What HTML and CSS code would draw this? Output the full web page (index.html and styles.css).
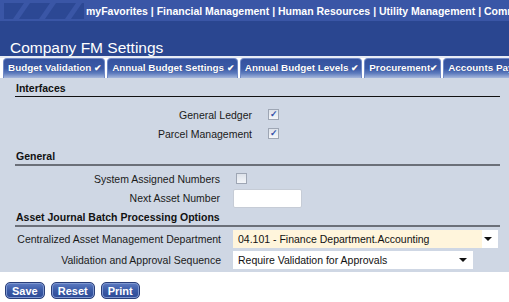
FILE: index.html
```html
<!DOCTYPE html>
<html>
	<head>
		<meta charset="UTF-8">
		<title>Company FM Settings</title>
		<link rel="stylesheet" href="styles.css">
	</head>
	<body>
		<div class="topbar">
			<svg class="logo" width="84" height="21" viewBox="0 0 84 21">
				<rect x="0" y="0" width="84" height="21" fill="#3a56a6"/>
				<polygon points="4,3 24,3 13,19 4,19" fill="#2c4894"/>
				<polygon points="30,3 50,3 39,19 19,19" fill="#2c4894"/>
				<polygon points="56,3 76,3 65,19 45,19" fill="#2c4894"/>
				<polygon points="82,3 84,3 84,19 71,19" fill="#2c4894"/>
			</svg>
			<div class="favs">myFavorites | Financial Management | Human Resources | Utility Management | Community Development</div>
		</div>
		<div class="titlebar">Company FM Settings</div>
		<div class="tabs">
			<div class="tab">Budget Validation <span class="chk">&#10004;</span></div>
			<div class="tab">Annual Budget Settings <span class="chk">&#10004;</span></div>
			<div class="tab">Annual Budget Levels <span class="chk">&#10004;</span></div>
			<div class="tab">Procurement<span class="chk">&#10004;</span></div>
			<div class="tab">Accounts Payable <span class="chk">&#10004;</span></div>
		</div>
		<div class="panel">
			<div class="section">Interfaces</div>
			<div class="rows rows-iface">
				<label>General Ledger</label>
				<span class="box checked">&#10003;</span>
				<label>Parcel Management</label>
				<span class="box checked">&#10003;</span>
			</div>
			<div class="section sec-gray sec-general">General</div>
			<div class="rows rows-gen">
				<label>System Assigned Numbers</label>
				<span class="box box-gen"></span>
				<label>Next Asset Number</label>
				<span class="txt"></span>
			</div>
			<div class="section sec-gray sec-asset">Asset Journal Batch Processing Options</div>
			<div class="rows rows-asset">
				<label>Centralized Asset Management Department</label>
				<div class="sel sel-yellow"><span>04.101 - Finance Department.Accounting</span><i class="arrow"></i></div>
				<label>Validation and Approval Sequence</label>
				<div class="sel sel-short"><span>Require Validation for Approvals</span><i class="arrow"></i></div>
			</div>
		</div>
		<div class="buttons">
			<button class="btn">Save</button>
			<button class="btn">Reset</button>
			<button class="btn">Print</button>
		</div>
	</body>
</html>
```
FILE: styles.css
```css
*{
	margin: 0;
	padding: 0;
	box-sizing: border-box;
}
body{
	width: 509px;
	height: 302px;
	overflow: hidden;
	background: #fff;
	font-family: "Liberation Sans", Arial, sans-serif;
	font-size: 10.5px;
	color: #111;
}
.topbar{
	height: 21px;
	background: #3a56a6;
	display: flex;
	align-items: center;
	white-space: nowrap;
	overflow: hidden;
}
.logo{
	flex: none;
}
.favs{
	color: #fff;
	font-weight: bold;
	font-size: 10.5px;
	padding-left: 2px;
}
.titlebar{
	height: 37px;
	background: #2a4690;
	color: #fff;
	font-size: 15.5px;
	padding: 18px 0 0 10px;
	border-bottom: 2px solid #e8ecf5;
}
.tabs{
	display: flex;
	gap: 2px;
	padding-left: 3px;
	background: #fff;
	white-space: nowrap;
	overflow: hidden;
}
.tab{
	flex: none;
	height: 20px;
	line-height: 18px;
	padding: 0 2px 0 4px;
	color: #fff;
	font-weight: bold;
	font-size: 9.9px;
	border: 1px solid #7089c6;
	border-bottom: none;
	border-radius: 4px 4px 0 0;
	background: linear-gradient(#34529f 0%, #3b5aa6 50%, #5d7bbd 75%, #a7b8dc 100%);
	text-shadow: 0 0 1px #1c3378;
}
.chk{
	font-size: 9px;
}
.panel{
	background: #cfd7e4;
	padding: 2px 9px 2px 15px;
}
.section{
	font-weight: bold;
	font-size: 10.5px;
	line-height: 12px;
	padding: 2px 0 2px 1px;
	border-bottom: 1px solid #111;
}
.sec-gray{
	border-bottom: 2px solid #6b6f78;
}
.sec-general{
	margin-top: 5px;
}
.sec-asset{
	margin-top: 1px;
}
.rows{
	display: grid;
	align-items: center;
}
.rows label{
	text-align: right;
	white-space: nowrap;
	color: #1a1a1a;
}
.rows-iface{
	grid-template-columns: 253px auto;
	grid-auto-rows: 19px;
	margin-top: 8px;
}
.rows-iface label{
	padding-right: 16px;
}
.rows-gen{
	grid-template-columns: 218px auto;
	grid-template-rows: 19px 20px;
	margin-top: 3px;
}
.rows-gen label{
	padding-right: 13px;
}
.box-gen{
	margin-left: 3px;
}
.rows-asset{
	grid-template-columns: 218px auto;
	grid-auto-rows: 20px;
	row-gap: 1px;
	margin-top: 2px;
}
.rows-asset label{
	padding-right: 12px;
}
.box{
	width: 11px;
	height: 11px;
	border: 1px solid #9ea6b4;
	background: linear-gradient(#dde2ea, #f4f6f9);
	color: #3250a8;
	font-size: 9px;
	line-height: 9px;
	text-align: center;
	font-weight: bold;
}
.txt{
	width: 69px;
	height: 19px;
	background: #fff;
	border: 1px solid #c6ccd6;
	border-radius: 2px;
}
.sel{
	height: 18px;
	background: #fff;
	display: flex;
	align-items: center;
	padding: 0 6px 0 5px;
}
.sel span{
	flex: 1;
}
.sel-yellow{
	width: 265px;
	background: linear-gradient(90deg, #fff5dc 0 94%, #fff 94%);
}
.sel-short{
	width: 240px;
}
.arrow{
	width: 0;
	height: 0;
	border-left: 4px solid transparent;
	border-right: 4px solid transparent;
	border-top: 4px solid #111;
}
.buttons{
	display: flex;
	gap: 6px;
	padding: 10px 0 0 5px;
}
.btn{
	font-family: "Liberation Sans", Arial, sans-serif;
	font-weight: bold;
	font-size: 11px;
	color: #fff;
	height: 17px;
	padding: 0 6px;
	border: 1px solid #2a3f7a;
	border-radius: 5px;
	background: linear-gradient(#5d7bc2 0%, #3a5aa6 50%, #2c4a96 100%);
	box-shadow: inset 0 0 0 1px #7f98d0;
}
```
